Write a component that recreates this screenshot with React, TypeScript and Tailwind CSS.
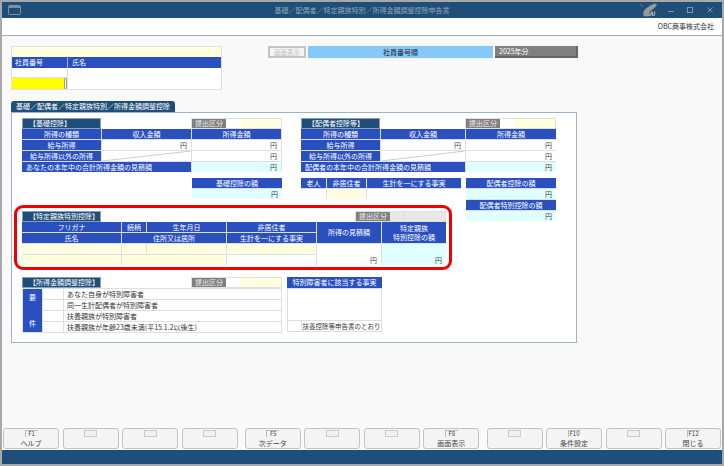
import type { ReactNode } from "react";

// ── small cell helpers ────────────────────────────────────────────────────

function Head({ children, className = "" }: { children?: ReactNode; className?: string }) {
  return (
    <div className={`bg-[#2a50bf] text-white flex items-center justify-center leading-none whitespace-nowrap ${className}`}>
      {children}
    </div>
  );
}

function Title({ children, className = "" }: { children: ReactNode; className?: string }) {
  return (
    <div className={`bg-[#1f4e79] text-white w-[79px] h-[11px] flex items-center pl-[6px] leading-none whitespace-nowrap border border-[#8a9fb5] ${className}`}>
      {children}
    </div>
  );
}

function Yen({ className = "bg-white" }: { className?: string }) {
  return <div className={`flex items-end justify-end pr-[4px] leading-[10px] text-[#444] ${className}`}>円</div>;
}

function Submit({ dim = false }: { dim?: boolean }) {
  return (
    <div className="flex h-[11px] border border-[#e0e0e0]">
      <div className="w-[34px] bg-[#808080] text-[#eee] flex items-center justify-center leading-none">提出区分</div>
      <div className={`w-[15px] ${dim ? "bg-[#e8e8e8] border-r border-[#ddd]" : "bg-white"}`} />
      <div className={`w-[40px] ${dim ? "bg-[#e8e8e8]" : "bg-[#ffffe0]"}`} />
    </div>
  );
}

// ── 基礎 / 配偶者 income table ───────────────────────────────────────────────

function IncomeTable({ title, total, col }: { title: string; total: string; col: string }) {
  return (
    <div className={col}>
      <div className="flex justify-between h-[11px]">
        <Title>{title}</Title>
        <Submit />
      </div>
      <div className="grid [grid-template-columns:var(--cols)] grid-rows-[10px_10px_10px_10px] gap-px bg-[#dcdfe6]">
        <Head>所得の種類</Head>
        <Head>収入金額</Head>
        <Head>所得金額</Head>
        <Head>給与所得</Head>
        <Yen />
        <Yen />
        <Head>給与所得以外の所得</Head>
        <div className="bg-white">
          <svg width="100%" height="10" viewBox="0 0 100 10" preserveAspectRatio="none">
            <line x1="100" y1="0" x2="0" y2="10" stroke="#ccc" strokeWidth="1" vectorEffect="non-scaling-stroke" />
          </svg>
        </div>
        <Yen />
        <Head className="col-span-2 !justify-start pl-[4px]">{total}</Head>
        <Yen className="bg-[#e0ffff]" />
      </div>
    </div>
  );
}

// ── highlighted 特定親族特別控除 table ────────────────────────────────────────

function SpecificRelative() {
  return (
    <div className="mt-[5px] ml-[2px] w-[438px] h-[65px] border-[3px] border-[#f00000] rounded-[9px] pl-[5px] pt-[3px]">
      <div className="flex justify-between w-[424px] h-[11px]">
        <Title>【特定親族特別控除】</Title>
        <Submit dim />
      </div>
      <div className="grid grid-cols-[99px_24px_79px_89px_64px_64px] grid-rows-[10px_10px_10px_10px] gap-px bg-[#dcdfe6] w-[424px]">
        <Head>フリガナ</Head>
        <Head>続柄</Head>
        <Head>生年月日</Head>
        <Head>非居住者</Head>
        <Head className="row-span-2">所得の見積額</Head>
        <Head className="row-span-2 flex-col gap-[2px]">
          <span>特定親族</span>
          <span>特別控除の額</span>
        </Head>
        <Head>氏名</Head>
        <Head className="col-span-2">住所又は居所</Head>
        <Head>生計を一にする事実</Head>
        <div className="bg-[#ffffe0]" />
        <div className="bg-[#ffffe0]" />
        <div className="bg-[#ffffe0]" />
        <div className="bg-[#ffffe0]" />
        <Yen className="row-span-2 bg-white" />
        <Yen className="row-span-2 bg-[#e0ffff]" />
        <div className="bg-[#ffffe0]" />
        <div className="col-span-2 bg-[#ffffe0]" />
        <div className="bg-white" />
      </div>
    </div>
  );
}

// ── 所得金額調整控除 ───────────────────────────────────────────────────────────

const adjustRows = [
  "あなた自身が特別障害者",
  "同一生計配偶者が特別障害者",
  "扶養親族が特別障害者",
  "扶養親族が年齢23歳未満(平15.1.2以後生)",
];

function Adjustment() {
  return (
    <div className="flex gap-[5px] mt-[7px] ml-[10px]">
      <div className="w-[260px]">
        <div className="flex justify-between h-[11px]">
          <Title>【所得金額調整控除】</Title>
          <Submit />
        </div>
        <div className="grid grid-cols-[19px_20px_1fr] grid-rows-[10px_10px_10px_10px] gap-px bg-[#dcdfe6] border border-[#dcdfe6]">
          <div className="row-span-4 bg-[#2a50bf] text-white flex flex-col items-center justify-between py-[5px] leading-none">
            <span>要</span>
            <span>件</span>
          </div>
          {adjustRows.map((r) => (
            <div key={r} className="contents">
              <div className="bg-white" />
              <div className="bg-white flex items-center pl-[3px] leading-none text-[#333] whitespace-nowrap">{r}</div>
            </div>
          ))}
        </div>
      </div>
      <div className="w-[95px]">
        <Head className="h-[11px]">特別障害者に該当する事実</Head>
        <div className="h-[44px] bg-white border border-[#dcdfe6] flex flex-col justify-end">
          <div className="flex h-[11px] border-t border-[#dcdfe6]">
            <div className="w-[14px] border-r border-[#dcdfe6]" />
            <div className="flex-1 flex items-center justify-center leading-none text-[#333] text-[6.5px] whitespace-nowrap">
              扶養控除等申告書のとおり
            </div>
          </div>
        </div>
      </div>
    </div>
  );
}

// ── function key row ──────────────────────────────────────────────────────

const fkeys = [
  [["F1", "ヘルプ"], ["", ""], ["", ""], ["", ""]],
  [["F5", "次データ"], ["", ""], ["", ""], ["F8", "画面表示"]],
  [["", ""], ["F10", "条件設定"], ["", ""], ["F12", "閉じる"]],
];

function FKey({ k, label }: { k: string; label: string }) {
  return (
    <div className="w-[56px] h-[21px] rounded-[3px] border border-[#c4c4c4] bg-[#f4f4f4] flex flex-col items-center text-[#444]">
      {k ? (
        <div className="mt-[1px] h-[7px] min-w-[13px] border-l border-t border-[#bbb] text-[6px] leading-[6px] text-center px-[1px]">{k}</div>
      ) : (
        <div className="mt-[1px] h-[7px] w-[13px] border border-[#ccc] bg-[#f0f0f0]" />
      )}
      <div className="leading-none mt-[3px]">{label}</div>
    </div>
  );
}

export default function App() {
  return (
    <div className="w-[724px] h-[466px] flex flex-col overflow-hidden bg-[#f9f9f9] border-x-2 border-y-2 border-[#a8a8a8] text-[7px] font-['Noto_Sans_CJK_JP','Liberation_Sans',sans-serif]">
      {/* Title bar */}
      <header className="h-[16px] shrink-0 bg-[#1f4e79] grid grid-cols-[1fr_auto_1fr] items-center">
        <svg width="13" height="10" viewBox="0 0 13 10" className="ml-[6px]">
          <rect x="0.5" y="0.5" width="12" height="9" rx="1" fill="none" stroke="#7f8f9e" strokeWidth="1" />
          <rect x="1" y="1" width="11" height="2" fill="#7f8f9e" />
        </svg>
        <div className="text-[#8ea6bd] leading-none">基礎／配偶者／特定親族特別／所得金額調整控除申告書</div>
        <div className="flex items-center justify-end">
          <svg width="22" height="14" viewBox="0 0 22 14" className="mr-[8px]">
            <path d="M2 1l3 3M6 13c-1-4 0-6 3-8s5-4 9-4c1 2-1 3-3 5-2 1-4 2-4 7z" fill="#9a9a92" stroke="#9a9a92" strokeWidth="0.6" />
            <text x="11" y="13" fontSize="6" fontStyle="italic" fontWeight="700" fill="#c8ccd0">AI</text>
          </svg>
          <div className="w-[6px] h-px bg-[#7f95a8] mt-[2px] mr-[13px]" />
          <div className="w-[6px] h-[6px] border border-[#7f95a8] mr-[14px]" />
          <svg width="6" height="6" viewBox="0 0 6 6" className="mr-[9px]">
            <path d="M0.5 0.5l5 5M5.5 0.5l-5 5" stroke="#7f95a8" strokeWidth="1" />
          </svg>
        </div>
      </header>

      {/* Company bar */}
      <div className="h-[18px] shrink-0 bg-white border-b border-[#a8a8a8] flex items-center justify-end pr-[8px] text-[#333] text-[7px] leading-none">
        OBC商事株式会社
      </div>

      <main className="flex-1 min-h-0 pt-[10px]">
        {/* Employee picker + sort */}
        <div className="flex h-[44px] ml-[9px]">
          <div className="w-[211px] border border-[#e0e0e0]">
            <div className="h-[10px] bg-[#ffffe0]" />
            <div className="h-[11px] bg-[#2a50bf] text-white flex leading-none">
              <div className="w-[56px] border-r border-[#9fb0e0] flex items-center pl-[3px]">社員番号</div>
              <div className="flex items-center pl-[4px]">氏名</div>
            </div>
            <div className="h-[21px] flex bg-white">
              <div className="w-[56px] border-r border-[#e0e0e0] flex flex-col">
                <div className="h-[10px] border-b border-[#e0e0e0]" />
                <div className="flex-1 flex">
                  <div className="w-[52px] bg-[#ffff00]" />
                  <div className="w-[3px] border border-[#999] rounded-[1px]" />
                </div>
              </div>
            </div>
          </div>
          <div className="ml-[46px] flex h-[12px] gap-[2px]">
            <div className="w-[38px] border-2 border-[#c4c4c4] bg-[#f4f4f4] text-[#c0c0c0] flex items-center justify-center text-[6.5px] leading-none">画面表示</div>
            <div className="w-[185px] bg-[#84c9fa] text-[#222] flex items-center justify-center leading-none">社員番号順</div>
            <div className="w-[83px] bg-[#808080] border-b-2 border-r-2 border-[#666] text-white flex items-center pl-[4px] leading-none">2025年分</div>
          </div>
        </div>

        {/* Tab */}
        <div className="ml-[9px] mt-[11px] w-[164px] h-[11px] bg-[#1f4e79] rounded-t-[3px] text-white flex items-center pl-[5px] leading-none whitespace-nowrap">
          基礎／配偶者／特定親族特別／所得金額調整控除
        </div>

        {/* Panel */}
        <div className="ml-[9px] w-[566px] h-[231px] border border-[#9db4c8] bg-white pt-[5px]">
          <div className="flex gap-[19px] ml-[10px]">
            <IncomeTable title="【基礎控除】" total="あなたの本年中の合計所得金額の見積額" col="w-[260px] [--cols:79px_89px_89px]" />
            <IncomeTable title="【配偶者控除等】" total="配偶者の本年中の合計所得金額の見積額" col="w-[255px] [--cols:79px_84px_90px]" />
          </div>

          <div className="flex">
            <div className="w-[454px]">
              <div className="flex mt-[5px] h-[23px]">
                <div className="mt-px ml-[180px] w-[90px] h-[21px] grid grid-rows-[10px_10px] gap-px bg-[#dcdfe6]">
                  <Head>基礎控除の額</Head>
                  <Yen className="bg-[#e0ffff]" />
                </div>
                <div className="mt-px ml-[19px] w-[160px] h-[21px] grid grid-cols-[25px_39px_94px] grid-rows-[10px_10px] gap-px bg-[#dcdfe6]">
                  <Head>老人</Head>
                  <Head>非居住者</Head>
                  <Head>生計を一にする事実</Head>
                  <div className="bg-white" />
                  <div className="bg-[#ffffe0]" />
                  <div className="bg-white" />
                </div>
              </div>
              <SpecificRelative />
              <Adjustment />
            </div>
            <div className="mt-[6px] w-[90px] h-[43px] grid grid-rows-[10px_10px_10px_10px] gap-px bg-[#dcdfe6]">
              <Head>配偶者控除の額</Head>
              <Yen className="bg-[#e0ffff]" />
              <Head>配偶者特別控除の額</Head>
              <Yen className="bg-[#e0ffff]" />
            </div>
          </div>
        </div>
      </main>

      {/* Function keys */}
      <div className="h-[22px] shrink-0 flex justify-between px-px">
        {fkeys.map((group, g) => (
          <div key={g} className="flex gap-[3.5px]">
            {group.map(([k, label], i) => (
              <FKey key={i} k={k} label={label} />
            ))}
          </div>
        ))}
      </div>

      <div className="h-[14px] shrink-0 bg-[#1f4e79]" />
    </div>
  );
}
